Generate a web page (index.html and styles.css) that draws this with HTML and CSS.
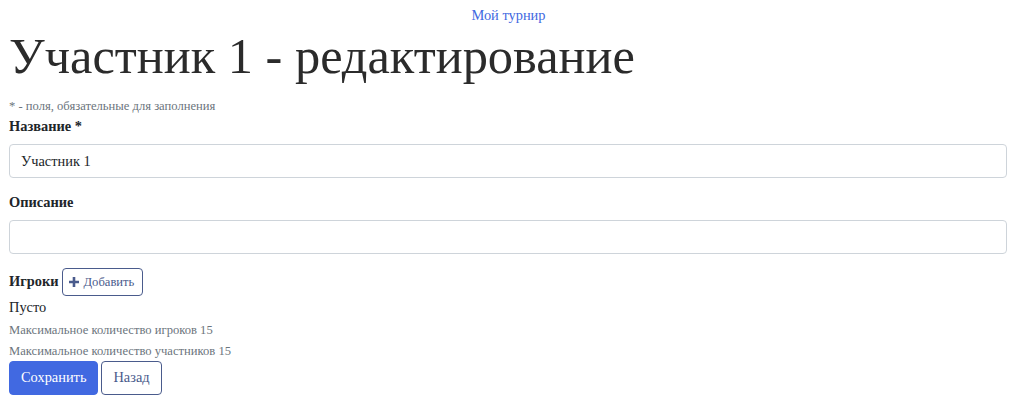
FILE: index.html
```html
<!DOCTYPE html>
<html lang="ru">
<head>
  <meta charset="UTF-8" />
  <meta name="viewport" content="width=device-width, initial-scale=1.0"/>
  <title>Участник 1 - редактирование</title>
  <link rel="stylesheet" href="styles.css">
</head>
<body>

  <!-- Навигация -->
  <nav class="topnav">
    <a href="#">Мой турнир</a>
  </nav>

  <div class="container">
    <h1>Участник 1 - редактирование</h1>
    <p class="hint">* - поля, обязательные для заполнения</p>

    <form id="form">
      <div class="field">
        <label for="nazvanie">Название *</label>
        <input type="text" id="nazvanie" value="Участник 1" required />
      </div>

      <div class="field">
        <label for="opisanie">Описание</label>
        <input type="text" id="opisanie" />
      </div>

      <div class="players">
        <div class="players-head">
          <span class="players-title">Игроки</span>
          <button type="button" class="btn btn-outline btn-sm">
            <svg width="10" height="10" viewBox="0 0 10 10" aria-hidden="true">
              <path d="M5 0v10M0 5h10" stroke="currentColor" stroke-width="2.6"/>
            </svg>
            Добавить
          </button>
        </div>
        <div class="empty">Пусто</div>
        <p class="muted">Максимальное количество игроков 15</p>
        <p class="muted">Максимальное количество участников 15</p>
      </div>

      <div class="actions">
        <button type="submit" class="btn btn-primary">Сохранить</button>
        <button type="button" class="btn btn-outline">Назад</button>
      </div>
    </form>
  </div>

</body>
</html>
```

FILE: styles.css
```css
:root {
  --azul: #4169e1;
  --texto: #212529;
  --cinza: #6c757d;
  --borda: #ced4da;
  --contorno: #4a5b8c;
}

* {
  margin: 0;
  padding: 0;
  box-sizing: border-box;
}

body {
  font-family: "Liberation Serif", "Times New Roman", serif;
  font-size: 14.4px;
  line-height: 1.5;
  color: var(--texto);
  background-color: #fff;
}

.topnav {
  display: flex;
  justify-content: center;
  padding-top: 5px;
  height: 29px;
}

.topnav a {
  color: var(--azul);
  text-decoration: none;
}

.container {
  padding: 0 10px 0 9px;
}

h1 {
  font-weight: 400;
  font-size: 50.4px;
  line-height: 55px;
  color: #2b2b2b;
  margin-bottom: 13px;
}

.hint,
.muted {
  font-size: 12.6px;
  color: var(--cinza);
}

form label,
.players-title {
  font-weight: bold;
  display: block;
  margin-bottom: 6.5px;
}

.field {
  margin-bottom: 14px;
}

form input {
  width: 100%;
  height: 34px;
  padding: 6px 11px;
  font-family: inherit;
  font-size: 14.4px;
  color: var(--texto);
  border: 1px solid var(--borda);
  border-radius: 4px;
}

.players {
  margin-top: 13px;
}

.players-head {
  display: flex;
  align-items: center;
  gap: 3px;
}

.players-head .players-title {
  margin-bottom: 0;
}

.empty {
  margin-top: 1px;
}

.muted {
  margin-top: 2px;
}

.actions {
  display: flex;
  gap: 3px;
}

.btn {
  font-family: inherit;
  font-size: 14.4px;
  height: 34px;
  padding: 0 11px;
  border-radius: 4px;
  cursor: pointer;
  display: inline-flex;
  align-items: center;
  gap: 5px;
}

.btn-primary {
  background-color: var(--azul);
  border: 1px solid var(--azul);
  color: #fff;
}

.btn-outline {
  background-color: #fff;
  border: 1px solid var(--contorno);
  color: var(--contorno);
}

.btn-sm {
  height: 28px;
  font-size: 12.6px;
  padding: 0 8px 0 6px;
}
```
